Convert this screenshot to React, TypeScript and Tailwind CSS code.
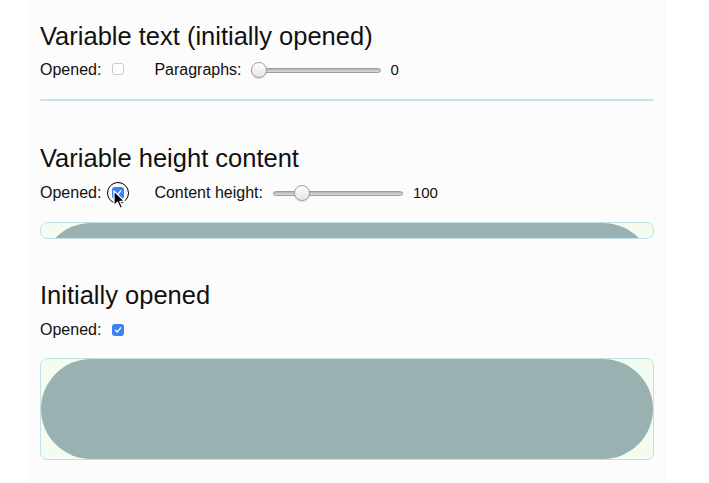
import React from "react";

function Checkbox({ checked }: { checked: boolean }) {
  if (!checked) {
    return <span className="inline-block h-[12px] w-[12px] rounded-[3px] border border-[#c9c9c9] bg-white" />;
  }
  return (
    <span className="flex h-[12px] w-[12px] items-center justify-center rounded-[3px] bg-[#3a82f6]">
      <svg width="8" height="8" viewBox="0 0 8 8">
        <path d="M1.3 4.2 L3.2 6 L6.7 1.8" fill="none" stroke="white" strokeWidth="1.3" strokeLinecap="round" strokeLinejoin="round" />
      </svg>
    </span>
  );
}

function Slider({ thumbLeft }: { thumbLeft: string }) {
  return (
    <div className="relative flex h-[20px] w-[130px] items-center">
      <div className="h-[5px] w-full rounded-full border border-[#9c9c9c] bg-gradient-to-b from-[#b3b3b3] to-[#dadada]" />
      <div
        className={`absolute top-[2px] h-[16px] w-[16px] rounded-full border border-[#9f9f9f] bg-gradient-to-b from-white to-[#e6e6e6] shadow-[0_1px_1px_rgba(0,0,0,0.15)] ${thumbLeft}`}
      />
    </div>
  );
}

function Row({ children }: { children: React.ReactNode }) {
  return <div className="flex h-[20px] items-center text-[16px] leading-[20px]">{children}</div>;
}

function Heading({ children, className = "" }: { children: React.ReactNode; className?: string }) {
  return <h2 className={`text-[25.5px] font-normal leading-[30px] ${className}`}>{children}</h2>;
}

export default function App() {
  return (
    <div className="min-h-screen bg-white font-['Liberation_Sans',Arial,sans-serif] text-[#111]">
      <div className="ml-[28px] min-h-[483px] w-[638px] bg-[#fcfcfc] px-[12px] pt-[21px]">
        {/* Variable text */}
        <Heading>Variable text (initially opened)</Heading>
        <div className="mt-[9px]">
          <Row>
            <span>Opened:</span>
            <span className="ml-[11px]">
              <Checkbox checked={false} />
            </span>
            <span className="ml-[30px]">Paragraphs:</span>
            <span className="ml-[9px]">
              <Slider thumbLeft="left-0" />
            </span>
            <span className="ml-[10px] text-[15px]">0</span>
          </Row>
        </div>
        <div className="mt-[19px] h-[2px] rounded-full bg-[#c3e3ec]" />

        {/* Variable height content */}
        <Heading className="mt-[42px]">Variable height content</Heading>
        <div className="mt-[10px]">
          <Row>
            <span>Opened:</span>
            <span className="relative ml-[11px]">
              <Checkbox checked={true} />
              <span className="absolute left-[-5px] top-[-5px] h-[22px] w-[22px] rounded-full border border-black" />
              <svg className="absolute left-[1px] top-[3px]" width="13" height="20" viewBox="0 0 13 20">
                <path d="M1 1 L1 15.5 L4.6 12.2 L7.2 18.2 L9.4 17.2 L6.9 11.4 L11.6 11.4 Z" fill="black" stroke="white" strokeWidth="1.2" strokeLinejoin="round" />
              </svg>
            </span>
            <span className="ml-[30px]">Content height:</span>
            <span className="ml-[10px]">
              <Slider thumbLeft="left-[21px]" />
            </span>
            <span className="ml-[10px] text-[15px]">100</span>
          </Row>
        </div>
        <div className="mt-[19px] h-[17px] overflow-hidden rounded-[7px] border border-[#bfe2e8] bg-[#f3fcef]">
          <div className="h-[100px] w-full rounded-full bg-[#99b1b1]" />
        </div>

        {/* Initially opened */}
        <Heading className="mt-[41px]">Initially opened</Heading>
        <div className="mt-[10px]">
          <Row>
            <span>Opened:</span>
            <span className="ml-[11px]">
              <Checkbox checked={true} />
            </span>
          </Row>
        </div>
        <div className="mt-[18px] h-[102px] overflow-hidden rounded-[7px] border border-[#bfe2e8] bg-[#f3fcef]">
          <div className="h-[100px] w-full rounded-full bg-[#99b1b1]" />
        </div>
      </div>
    </div>
  );
}
